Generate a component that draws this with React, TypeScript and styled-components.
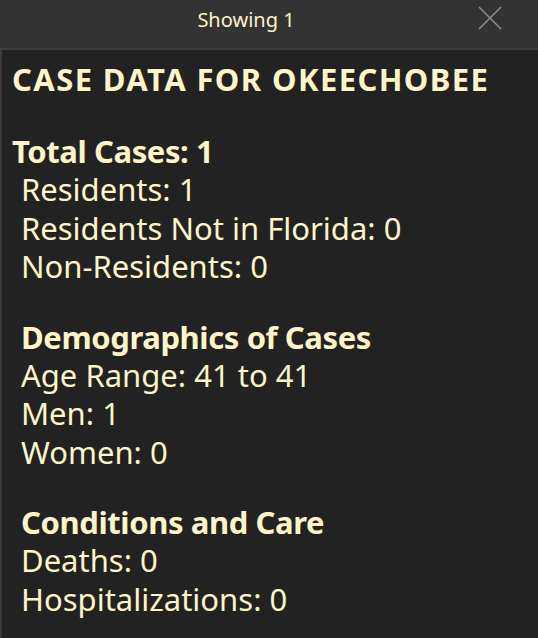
import React from 'react';
import styled, {createGlobalStyle} from 'styled-components';

const sections = [
  {
    heading: 'Demographics of Cases',
    rows: ['Age Range: 41 to 41', 'Men: 1', 'Women: 0'],
  },
  {
    heading: 'Conditions and Care',
    rows: ['Deaths: 0', 'Hospitalizations: 0'],
  },
];

const App = () => {
  return (
    <>
      <GlobalStyle />
      <Popup>
        <Header>
          <HeaderTitle>Showing 1</HeaderTitle>
          <CloseButton aria-label="Close">
            <svg width="24" height="24" viewBox="0 0 24 24" fill="none">
              <path d="M1 1L23 23M23 1L1 23" stroke="#8a8a8a" strokeWidth="1.6" />
            </svg>
          </CloseButton>
        </Header>
        <Body>
          <Title>CASE DATA FOR OKEECHOBEE</Title>
          <Section>
            <Heading>Total Cases: 1</Heading>
            <Row $indent>Residents: 1</Row>
            <Row $indent>Residents Not in Florida: 0</Row>
            <Row $indent>Non-Residents: 0</Row>
          </Section>
          {sections.map((s) => (
            <Section key={s.heading}>
              <Heading $indent>{s.heading}</Heading>
              {s.rows.map((r) => (
                <Row key={r} $indent>
                  {r}
                </Row>
              ))}
            </Section>
          ))}
        </Body>
      </Popup>
    </>
  );
};

const GlobalStyle = createGlobalStyle`
  html, body {
    margin: 0;
    padding: 0;
    background: #3a3a3a;
  }
  body {
    font-family: "Noto Sans", "Open Sans", sans-serif;
  }
`;

const Popup = styled.div`
  width: 538px;
  height: 638px;
  display: flex;
  flex-direction: column;
  background: #3a3a3a;
  overflow: hidden;
`;

const Header = styled.div`
  height: 48px;
  flex: none;
  position: relative;
  display: flex;
  align-items: center;
  justify-content: center;
  background: #333333;
  border-bottom: 2px solid #3e3e3e;
`;

const HeaderTitle = styled.span`
  font-size: 20px;
  color: #fbf3c6;
  margin-top: -10px;
  margin-left: -46px;
`;

const CloseButton = styled.button`
  position: absolute;
  right: 36px;
  top: 6px;
  width: 24px;
  height: 24px;
  padding: 0;
  border: none;
  background: none;
  cursor: pointer;
  svg {
    display: block;
  }
`;

const Body = styled.div`
  flex: 1;
  margin: 0 0 8px 2px;
  background: #222222;
  padding: 10px 0 0 10px;
  color: #fdf5c7;
  white-space: nowrap;
`;

const Title = styled.div`
  font-size: 31px;
  font-weight: 700;
  line-height: 38px;
  letter-spacing: 1.4px;
  margin-bottom: 34px;
`;

const Section = styled.div`
  margin-bottom: 32px;
`;

const Heading = styled.div<{$indent?: boolean}>`
  font-size: 31px;
  font-weight: 700;
  line-height: 38px;
  letter-spacing: -0.4px;
  padding-left: ${(p) => (p.$indent ? '9px' : '0')};
`;

const Row = styled.div<{$indent?: boolean}>`
  font-size: 31px;
  line-height: 38.5px;
  padding-left: ${(p) => (p.$indent ? '9px' : '0')};
`;

export default App;
